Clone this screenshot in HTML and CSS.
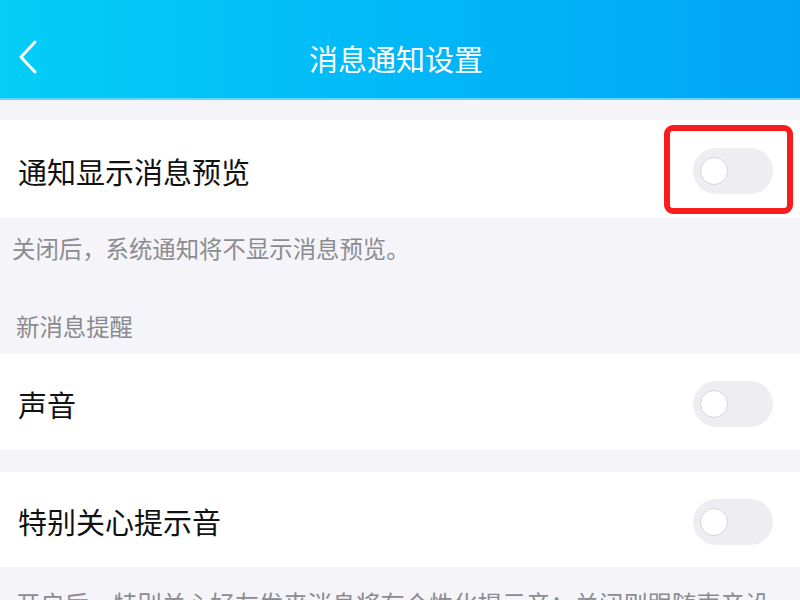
FILE: index.html
```html
<!DOCTYPE html>
<html lang="zh-CN">
<head>
<meta charset="utf-8">
<title>消息通知设置</title>
<link rel="stylesheet" href="styles.css">
</head>
<body>
<div class="page">
  <header class="topbar">
    <svg class="back" width="20" height="34" viewBox="0 0 20 34"><polyline points="17,2 3,17 17,32" fill="none" stroke="#fff" stroke-width="3" stroke-linecap="round" stroke-linejoin="round"/></svg>
    <h1 class="title">消息通知设置</h1>
  </header>
  <div class="spacer"></div>
  <div class="row row-first">
    <span class="label">通知显示消息预览</span>
    <div class="highlight">
      <span class="toggle"><span class="knob"></span></span>
    </div>
  </div>
  <p class="desc desc-first">关闭后，系统通知将不显示消息预览。</p>
  <p class="section">新消息提醒</p>
  <div class="row row-sound">
    <span class="label">声音</span>
    <span class="toggle"><span class="knob"></span></span>
  </div>
  <div class="gap"></div>
  <div class="row row-care">
    <span class="label">特别关心提示音</span>
    <span class="toggle"><span class="knob"></span></span>
  </div>
  <p class="desc desc-last">开启后，特别关心好友发来消息将有个性化提示音；关闭则跟随声音设置。</p>
</div>
</body>
</html>
```

FILE: styles.css
```css
html, body {
  margin: 0;
  padding: 0;
  background: #f5f5f9;
  font-family: "Noto Sans CJK SC", "Noto Sans", sans-serif;
}
.page {
  width: 800px;
  height: 600px;
  overflow: hidden;
  display: flex;
  flex-direction: column;
}
.page > * {
  flex: none;
}
.topbar {
  height: 100px;
  background: linear-gradient(90deg, #03cef7 0%, #02b8f7 50%, #02a5f6 100%);
  border-bottom: 2px solid #5fd6fb;
  display: flex;
  align-items: center;
  justify-content: center;
  position: relative;
  box-sizing: border-box;
}
.back {
  position: absolute;
  left: 18px;
  top: 40px;
}
.title {
  margin: 0;
  color: #fff;
  font-weight: 400;
  font-size: 29px;
  margin-left: -8px;
  margin-top: 18px;
}
.spacer {
  height: 20px;
}
.row {
  background: #fff;
  display: flex;
  align-items: center;
  justify-content: space-between;
  padding: 0 27px 0 18px;
}
.row-first { height: 98px; padding-right: 7px; }
.row-sound { height: 96px; }
.row-care { height: 95px; }
.label {
  font-size: 29px;
  color: #111;
  line-height: 1;
  margin-top: 4px;
}
.highlight {
  width: 129px;
  height: 89px;
  box-sizing: border-box;
  border: 6px solid #f81c1c;
  border-radius: 9px;
  display: flex;
  align-items: center;
  padding-left: 23px;
}
.toggle {
  width: 80px;
  height: 46px;
  border-radius: 23px;
  background: #ededf2;
  display: flex;
  align-items: center;
  padding-left: 7px;
  box-sizing: border-box;
  margin-top: 4px;
}
.knob {
  width: 28px;
  height: 28px;
  border-radius: 50%;
  background: #fff;
  border: 1.5px solid #d6d6dc;
  box-sizing: border-box;
}
.desc, .section {
  margin: 0;
  color: #8c8c90;
  font-size: 23.4px;
  line-height: 1;
  white-space: nowrap;
}
.desc-first {
  padding: 19px 0 0 12px;
  height: 42px;
  box-sizing: border-box;
}
.section {
  padding: 55px 0 0 16px;
  height: 94px;
  box-sizing: border-box;
  color: #8a8a8e;
}
.gap {
  height: 22px;
}
.desc-last {
  font-size: 24.3px;
  white-space: normal;
  line-height: 1.4;
  padding: 19px 16px 0 16px;
}
```
